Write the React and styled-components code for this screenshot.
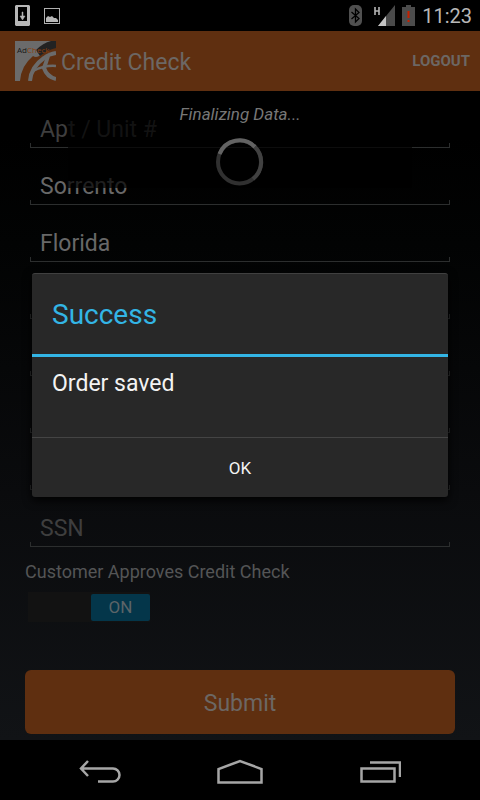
import React, { useState } from 'react';
import styled, { createGlobalStyle, css } from 'styled-components';

const GlobalStyle = createGlobalStyle`
  * {
    box-sizing: border-box;
  }
  body {
    margin: 0;
    background: #000;
    font-family: Roboto, 'Liberation Sans', sans-serif;
  }
  button, input {
    font-family: inherit;
  }
`;

const Page = styled.div`
  display: flex;
  flex-direction: column;
  min-height: 100vh;
`;

const StatusBar = styled.header`
  display: flex;
  align-items: center;
  justify-content: space-between;
  height: 31px;
  padding: 0 8px 0 15px;
  background: #000;
`;

const StatusGroup = styled.div`
  display: flex;
  align-items: center;
  gap: ${({ $gap }) => $gap}px;
`;

const Clock = styled.span`
  color: #b8b8b8;
  font-size: 20px;
  line-height: 30px;
`;

const Screen = styled.main`
  position: relative;
  display: flex;
  flex: 1;
  flex-direction: column;
  background: linear-gradient(#000 15%, #020303 30%, #0a0b0d 65%, #111316);
`;

const AppBar = styled.div`
  display: flex;
  align-items: center;
  height: 60px;
  padding: 0 10px 0 15px;
  background: #5f2f10;
`;

const Title = styled.h1`
  flex: 1;
  margin: 0 0 0 5px;
  padding-top: 3px;
  color: #6c6764;
  font-size: 23px;
  font-weight: 400;
  line-height: 30px;
`;

const LogoutButton = styled.button`
  padding: 0;
  border: 0;
  background: none;
  color: #6c6764;
  font-size: 15px;
  font-weight: 700;
`;

const Form = styled.form`
  display: flex;
  flex: 1;
  flex-direction: column;
  padding: 0 25px 6px;
`;

const Field = styled.div`
  display: flex;
  flex-direction: column;
  justify-content: flex-end;
  height: 57px;
  padding: 0 5px;
`;

// holo style underline, a thin line with short ticks at both ends
const TextInput = styled.input`
  width: 100%;
  height: 38px;
  padding: 0 10px;
  border: 0;
  background:
    linear-gradient(#2c2e2e, #2c2e2e) left bottom / 1px 5px no-repeat,
    linear-gradient(#2c2e2e, #2c2e2e) right bottom / 1px 5px no-repeat,
    linear-gradient(#2c2e2e, #2c2e2e) left bottom / 100% 1px no-repeat;
  color: #686868;
  font-size: 23px;
  outline: none;

  &::placeholder {
    color: #3e3e3e;
    opacity: 1;
  }
`;

const Caption = styled.label`
  margin-top: 13px;
  color: #545556;
  font-size: 18px;
  line-height: 24px;
`;

const Toggle = styled.label`
  display: flex;
  align-items: center;
  justify-content: ${({ $on }) => ($on ? 'flex-end' : 'flex-start')};
  width: 122px;
  height: 30px;
  margin: 8px 0 0 3px;
  background: #121212;
`;

const HiddenCheckbox = styled.input`
  width: 1px;
  height: 1px;
  margin: 0;
  appearance: none;
`;

const Thumb = styled.span`
  width: 59px;
  border-radius: 2px;
  background: ${({ $on }) => ($on ? '#04364a' : '#222')};
  color: #5c6468;
  font-size: 17px;
  line-height: 27px;
  text-align: center;
`;

const SubmitButton = styled.button`
  height: 64px;
  margin-top: auto;
  padding: 2px 0 0;
  border: 0;
  border-radius: 6px;
  background: #5f2f10;
  color: #6c6764;
  font-size: 23px;
`;

const Progress = styled.div`
  position: absolute;
  top: 60px;
  left: 0;
  right: 0;
  display: flex;
  flex-direction: column;
  align-items: center;
  gap: 12px;
  height: 97px;
  margin: 0 68px;
  padding-top: 11px;
  background: rgba(0, 0, 0, 0.7);
`;

const ProgressText = styled.p`
  margin: 0;
  color: #777;
  font-size: 17px;
  font-style: italic;
  line-height: 24px;
`;

const DialogLayer = styled.div`
  position: absolute;
  inset: 0;
  display: flex;
  align-items: center;
  padding: 0 32px 2px;
`;

const Dialog = styled.section`
  width: 100%;
  overflow: hidden;
  border-top: 1px solid #404040;
  border-radius: 3px;
  background: #282828;
  box-shadow: 0 3px 10px #000;
`;

const DialogTitle = styled.h2`
  margin: 0;
  padding: 2px 20px 0;
  border-bottom: 3px solid #33b5e5;
  color: #33b5e5;
  font-size: 28px;
  font-weight: 400;
  line-height: 78px;
`;

const DialogMessage = styled.p`
  height: 80px;
  margin: 0;
  padding: 12px 20px;
  color: #f3f3f3;
  font-size: 23px;
  line-height: 30px;
`;

const DialogButton = styled.button`
  display: block;
  width: 100%;
  height: 60px;
  padding: 2px 0 0;
  border: 0;
  border-top: 1px solid #444;
  background: none;
  color: #f3f3f3;
  font-size: 17px;
`;

const NavBar = styled.nav`
  display: flex;
  align-items: center;
  justify-content: center;
  height: 60px;
  padding-top: 3px;
  background: #000;
`;

const navIcon = css`
  display: block;
  fill: none;
  stroke: #a6a6a6;
  stroke-width: 2.5;
`;

const NavButton = styled.button`
  display: flex;
  justify-content: center;
  width: 140px;
  padding: 0;
  border: 0;
  background: none;

  svg {
    ${navIcon}
  }
`;

const fields = [
  { name: 'unit', label: 'Apt / Unit #', value: '' },
  { name: 'city', label: 'City', value: 'Sorrento' },
  { name: 'state', label: 'State', value: 'Florida' },
  { name: 'zip', label: '', value: '' },
  { name: 'phone', label: '', value: '' },
  { name: 'email', label: '', value: '' },
  { name: 'birth', label: '', value: '' },
  { name: 'ssn', label: 'SSN', value: '' },
];

const Logo = () => (
  <svg width="41" height="40" viewBox="0 0 41 40">
    <rect width="41" height="40" fill="#6b6b6b" />
    <path d="M41 6V40H5Q6 25 18 15Q22 18 28 12Q34 7 41 6Z" fill="#5f2f10" />
    <path d="M21 9Q28 2 36 0H41V7Q32 9 25 15Z" fill="#222" />
    <g fill="none" stroke="#6b6b6b">
      <path d="M15 40Q16 26 29 17Q34 13 41 12" strokeWidth="4" />
      <path d="M33 15Q31 22 29 27Q32 36 41 38" strokeWidth="4" />
      <path d="M18 30Q30 24 41 25" strokeWidth="2.500" />
    </g>
    <text x="2" y="12" fontFamily="Open Sans, sans-serif" fontSize="8" fill="#171717">
      Ad<tspan fill="#8a3f10">Check</tspan>
    </text>
  </svg>
);

const DownloadIcon = () => (
  <svg width="15" height="21" viewBox="0 0 15 21">
    <path fillRule="evenodd" d="M1 0H14L15 1V20L14 21H1L0 20V1Z M3 2V16H12V2Z" fill="#b7b7b7" />
    <path d="M7 7H8V11H10L7.500 15L5 11H7Z" fill="#b7b7b7" stroke="#b7b7b7" strokeWidth=".5" />
  </svg>
);

const PictureIcon = () => (
  <svg width="16" height="16" viewBox="0 0 16 16">
    <rect x=".5" y=".5" width="15" height="15" fill="none" stroke="#b0b0b0" />
    <path d="M2 14V10L4 8L6 9L8 8L10 10L12 10L14 12V14Z" fill="#b7b7b7" />
  </svg>
);

const BluetoothIcon = () => (
  <svg width="13" height="21" viewBox="0 0 13 21">
    <rect width="13" height="21" rx="5" fill="#505050" />
    <path d="M2.500 7L10 13.500L6.500 17V4L10 7.500L2.500 14" fill="none" stroke="#000" strokeWidth="1.300" />
  </svg>
);

const SignalIcon = () => (
  <svg width="21" height="21" viewBox="0 0 21 21">
    <path d="M21 0V21H4Z" fill="#4a4a4a" />
    <path d="M12 11V21H4Z" fill="#c4c4c4" />
    <path d="M1 2V10M5 2V10M1 6H5" stroke="#b4b4b4" strokeWidth="1.600" />
  </svg>
);

const BatteryIcon = () => (
  <svg width="13" height="21" viewBox="0 0 13 21">
    <path d="M4 0H9V2H13V21H0V2H4Z" fill="#4c4c4c" />
    <path d="M5.500 6H7.500V13H5.500ZM5.500 15H7.500V17H5.500Z" fill="#c52000" />
  </svg>
);

const Spinner = () => (
  <svg width="48" height="48" viewBox="0 0 48 48">
    <circle cx="23.500" cy="24" r="21.500" fill="none" stroke="#303030" strokeWidth="4" />
    <path d="M3.500 16A21.500 21.500 0 0 1 39 9" fill="none" stroke="#636363" strokeWidth="4" />
    <path d="M39 9A21.500 21.500 0 0 1 37 41" fill="none" stroke="#414141" strokeWidth="4" />
  </svg>
);

const App = () => {
  const [approved, setApproved] = useState(true);
  const [open, setOpen] = useState(true);

  return (
    <Page>
      <GlobalStyle />
      <StatusBar>
        <StatusGroup $gap={14}>
          <DownloadIcon />
          <PictureIcon />
        </StatusGroup>
        <StatusGroup $gap={12}>
          <BluetoothIcon />
          <StatusGroup $gap={7}>
            <SignalIcon />
            <BatteryIcon />
            <Clock>11:23</Clock>
          </StatusGroup>
        </StatusGroup>
      </StatusBar>

      <Screen>
        <AppBar>
          <Logo />
          <Title>Credit Check</Title>
          <LogoutButton type="button">LOGOUT</LogoutButton>
        </AppBar>

        <Form onSubmit={(e) => e.preventDefault()}>
          {fields.map(({ name, label, value }) => (
            <Field key={name}>
              <TextInput
                name={name}
                aria-label={label || name}
                placeholder={label}
                defaultValue={value}
              />
            </Field>
          ))}
          <Caption htmlFor="approve">Customer Approves Credit Check</Caption>
          <Toggle $on={approved}>
            <HiddenCheckbox
              id="approve"
              type="checkbox"
              checked={approved}
              onChange={(e) => setApproved(e.target.checked)}
            />
            <Thumb $on={approved}>{approved ? 'ON' : 'OFF'}</Thumb>
          </Toggle>
          <SubmitButton type="submit">Submit</SubmitButton>
        </Form>

        <Progress>
          <ProgressText>Finalizing Data...</ProgressText>
          <Spinner />
        </Progress>

        {open && (
          <DialogLayer>
            <Dialog role="alertdialog" aria-labelledby="dialog-title">
              <DialogTitle id="dialog-title">Success</DialogTitle>
              <DialogMessage>Order saved</DialogMessage>
              <DialogButton type="button" onClick={() => setOpen(false)}>OK</DialogButton>
            </Dialog>
          </DialogLayer>
        )}
      </Screen>

      <NavBar>
        <NavButton type="button" aria-label="Back">
          <svg width="42" height="24" viewBox="0 0 42 24">
            <path d="M9 1L2 8.500L9 16M2 8.500H34A6.500 6.500 0 0 1 34 21.500H19" />
          </svg>
        </NavButton>
        <NavButton type="button" aria-label="Home">
          <svg width="46" height="26" viewBox="0 0 46 26">
            <path d="M1.500 23.500V10L23 2L44.500 10V23.500Z" />
          </svg>
        </NavButton>
        <NavButton type="button" aria-label="Recent apps">
          <svg width="42" height="24" viewBox="0 0 42 24">
            <path d="M2.500 8.500H35.500V21.500H2.500Z M11 2.500H41V17" />
          </svg>
        </NavButton>
      </NavBar>
    </Page>
  );
};

export default App;
